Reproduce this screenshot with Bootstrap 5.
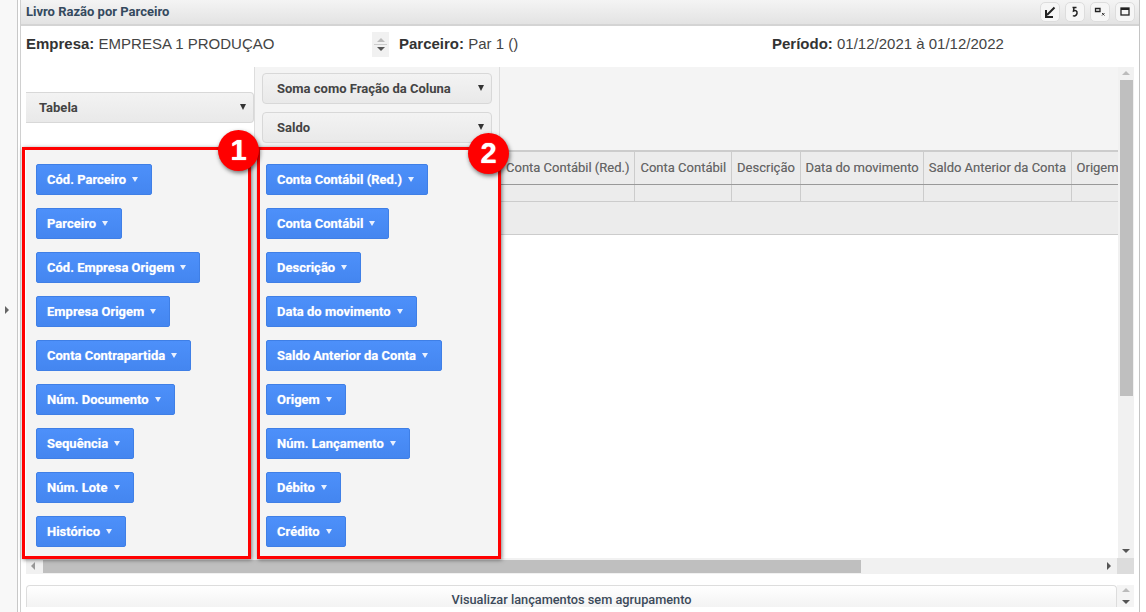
<!DOCTYPE html>
<html lang="pt-BR"><head><meta charset="utf-8"><title>Livro Razão por Parceiro</title>
<link href="https://cdn.jsdelivr.net/npm/bootstrap@5.3.0/dist/css/bootstrap.min.css" rel="stylesheet">
<style>
html,body{height:612px;overflow:hidden;background:#fff;font-family:"Liberation Sans",Arial,sans-serif}
.shell{height:612px;width:1146px;position:relative}
.rail{width:18px;background:#f8f8f8;border-right:1px solid #c8c8c8;margin-right:2px;padding-top:8px}
.rail-arrow{width:0;height:0;border-left:4px solid #666;border-top:4px solid transparent;border-bottom:4px solid transparent;margin-left:5px}
.panel{width:1120px;height:612px;border-left:1px solid #d0d0d0;border-right:1px solid #c4c4c4}
.phead{height:26px;background:linear-gradient(#f4f4f4,#e3e3e3);border-bottom:2px solid #d4d4d4;padding:0 4px 1px 5px;font:700 13px Roboto,sans-serif;color:#34495e}
.hgap{gap:5px}
.hbtn{width:20px;height:20px;background:#f6f6f6;border:1px solid #ddd;border-radius:5px}
.infor{height:41px;padding:0 0 5px 5px;font-size:15px;color:#444}
.infor b{color:#333}
.i1{width:346px}.i2{width:400px}
.spin{width:17px;height:25px;background:#f1f1f1;margin-right:10px}
.up{width:0;height:0;border-left:4px solid transparent;border-right:4px solid transparent;border-bottom:4px solid #bbb}
.dn{width:0;height:0;border-left:4px solid transparent;border-right:4px solid transparent;border-top:4px solid #555}
.spin hr{width:13px;margin:2px 0;opacity:1;border-color:#ccc}
.pivot{margin-left:5px;width:1108px}
.view{width:1092px;height:491px;overflow:hidden}
.c1{width:228px;flex:none}.c2{width:246px;flex:none}
.c1top{height:83px;padding-top:25px;background:#fff}
.c2top{height:83px;background:#f4f4f4;border-left:1px solid #ddd;border-right:1px solid #ddd;padding:6px 7px 0 7px}
.c3top{height:83px;background:#f4f4f4;flex:1}
.pick{height:31px;background:linear-gradient(#f3f3f3,#e9e9e9);border:1px solid #d8d8d8;font:700 13px Roboto,sans-serif;color:#444;padding:0 14px;border-radius:4px;position:relative}
.pick::after{content:"";position:absolute;right:7px;top:11px;border-left:3.5px solid transparent;border-right:3.5px solid transparent;border-top:6px solid #333}
.pick-a{width:228px;border-left:0;border-radius:0 4px 4px 0;padding-left:13px}
.chips{background:#f4f4f4;height:408px;padding:14px 0 0 10px;gap:13px}
.chips2{padding-left:12px}
.chip{height:31px;align-self:flex-start;background:linear-gradient(#4d90fa,#4486f0);border:1px solid #3f7fe6;border-radius:2px;color:#fff;font:700 13px Roboto,sans-serif;padding:0 13px 0 10px;text-shadow:0 0 1px rgba(255,255,255,.5)}
.chip::after{content:"";margin-left:6px;border-left:3.5px solid transparent;border-right:3.5px solid transparent;border-top:5px solid #e8f0ff}
.grid-wrap{flex:1;overflow:hidden;background:#fff}
.gt{border-collapse:collapse;font:400 13px Roboto,sans-serif;color:#666;white-space:nowrap;margin:0;text-shadow:0 0 .5px rgba(90,90,90,.5)}
.gt th{font-weight:400;background:#ececec;height:33px;padding:0 5px;border-left:1px solid #ccc;border-right:1px solid #ccc;border-top:2px solid #ccc;border-bottom:1px solid #999}
.gt th:first-child{padding-left:6px}
.gt th:nth-child(4),.gt th:nth-child(5){padding:0 4.5px}
.gt td{background:#ececec;height:17px;border:1px solid #ccc;padding:0}
.gt th:first-child,.gt td:first-child{border-left:0}
.grp{height:33px;background:#ececec;border-bottom:1px solid #ccc}
.vsb{width:16px;background:#f1f1f1;padding:0 0 5px}
.vth{width:13px;height:316px;background:#bfbfbf;margin:5px 0 0 0}
.hsb{height:16px;background:#f1f1f1;width:1108px}
.hth{width:818px;height:13px;background:#bfbfbf;margin:1px 0 0 0}
.lft{width:0;height:0;border-right:4px solid #999;border-top:4px solid transparent;border-bottom:4px solid transparent;margin:0 8px 0 5px}
.rgt{width:0;height:0;border-left:4px solid #555;border-top:4px solid transparent;border-bottom:4px solid transparent;margin-right:6px}
.corner{width:17px;height:16px;background:#dcdcdc}
.foot{margin:11px 0 0 5px;width:1108px;height:22px}
.fbtn{width:1091px;height:22px;background:linear-gradient(#fff,#f3f3f3);border:1px solid #ddd;border-bottom:0;border-radius:4px 4px 0 0;font:500 12.75px Roboto,sans-serif;color:#3c4a5a;padding-top:6px;overflow:hidden;white-space:nowrap}
.fspin{width:17px;background:#f4f4f4}
.redbox{position:absolute;border:3px solid #f00;box-shadow:1px 1px 4px rgba(0,0,0,.5);top:147px;height:412px;pointer-events:none}
.r1{left:22px;width:229px}.r2{left:257px;width:244px}
.num{position:absolute;width:41px;height:41px;border-radius:50%;background:#f00;color:#fff;font:700 29px/41px "Liberation Sans",sans-serif;text-align:center;box-shadow:1px 2px 4px rgba(0,0,0,.55);text-shadow:0 0 1px #fff}
.n1{left:218px;top:130px}.n2{left:468px;top:133px}
</style></head><body>
<div class="shell d-flex">
<aside class="rail d-flex align-items-center"><span class="rail-arrow"></span></aside>
<main class="panel">
<div class="phead d-flex align-items-center justify-content-between"><span>Livro Razão por Parceiro</span>
<div class="d-flex hgap">
<span class="hbtn d-flex align-items-center justify-content-center"><svg width="14" height="14" viewBox="0 0 14 14"><path d="M11.5 2.5 4 10M3 5v7h7" fill="none" stroke="#222" stroke-width="2"/></svg></span>
<span class="hbtn d-flex align-items-center justify-content-center"><svg width="10" height="12" viewBox="0 0 10 12"><path d="M2.5 1.5h4M4 1.5 3.500 5c2-1 4 0 3.500 2.500S4 10.500 3 9.500" fill="none" stroke="#222" stroke-width="1.500"/></svg></span>
<span class="hbtn d-flex align-items-center justify-content-center"><svg width="12" height="10" viewBox="0 0 12 10"><path d="M1.500 1.500h4.500v3h-4.500z" fill="none" stroke="#222" stroke-width="1.300"/><path d="M8 6l2.500 2.500M10.500 6 8 8.500" stroke="#333"/></svg></span>
<span class="hbtn d-flex align-items-center justify-content-center"><svg width="10" height="9" viewBox="0 0 10 9"><rect x="1" y="1" width="8" height="7" fill="none" stroke="#222" stroke-width="1.300"/><rect x="1" y="1" width="8" height="2" fill="#222"/></svg></span>
</div></div>
<div class="infor d-flex align-items-center">
<div class="i1"><b>Empresa:</b> EMPRESA 1 PRODUÇAO</div>
<div class="i2 d-flex align-items-center"><span class="spin d-flex flex-column align-items-center justify-content-center"><i class="up"></i><hr><i class="dn"></i></span><span><b>Parceiro:</b> Par 1 ()</span></div>
<div><b>Período:</b> 01/12/2021 à 01/12/2022</div>
</div>
<div class="pivot">
<div class="d-flex">
<div class="view d-flex">
<div class="c1">
<div class="c1top d-flex align-items-start"><div class="pick pick-a d-flex align-items-center">Tabela</div></div>
<div class="chips d-flex flex-column">
<span class="chip d-inline-flex align-items-center">Cód. Parceiro</span>
<span class="chip d-inline-flex align-items-center">Parceiro</span>
<span class="chip d-inline-flex align-items-center">Cód. Empresa Origem</span>
<span class="chip d-inline-flex align-items-center">Empresa Origem</span>
<span class="chip d-inline-flex align-items-center">Conta Contrapartida</span>
<span class="chip d-inline-flex align-items-center">Núm. Documento</span>
<span class="chip d-inline-flex align-items-center">Sequência</span>
<span class="chip d-inline-flex align-items-center">Núm. Lote</span>
<span class="chip d-inline-flex align-items-center">Histórico</span>
</div></div>
<div class="c2">
<div class="c2top d-flex flex-column gap-2"><div class="pick d-flex align-items-center">Soma como Fração da Coluna</div><div class="pick d-flex align-items-center">Saldo</div></div>
<div class="chips chips2 d-flex flex-column">
<span class="chip d-inline-flex align-items-center">Conta Contábil (Red.)</span>
<span class="chip d-inline-flex align-items-center">Conta Contábil</span>
<span class="chip d-inline-flex align-items-center">Descrição</span>
<span class="chip d-inline-flex align-items-center">Data do movimento</span>
<span class="chip d-inline-flex align-items-center">Saldo Anterior da Conta</span>
<span class="chip d-inline-flex align-items-center">Origem</span>
<span class="chip d-inline-flex align-items-center">Núm. Lançamento</span>
<span class="chip d-inline-flex align-items-center">Débito</span>
<span class="chip d-inline-flex align-items-center">Crédito</span>
</div></div>
<div class="grid-wrap">
<div class="c3top"></div>
<table class="gt"><tr><th>Conta Contábil (Red.)</th><th>Conta Contábil</th><th>Descrição</th><th>Data do movimento</th><th>Saldo Anterior da Conta</th><th>Origem</th></tr>
<tr><td></td><td></td><td></td><td></td><td></td><td></td></tr></table>
<div class="grp"></div>
</div>
</div>
<div class="vsb d-flex flex-column align-items-center justify-content-between"><div class="d-flex flex-column align-items-center"><i class="up mt-1"></i><div class="vth"></div></div><i class="dn"></i></div>
</div>
<div class="d-flex"><div class="hsb d-flex align-items-center"><i class="lft"></i><div class="hth"></div><i class="rgt ms-auto"></i></div><div class="corner"></div></div>
</div>
<div class="foot d-flex"><div class="fbtn text-center">Visualizar lançamentos sem agrupamento</div><div class="fspin d-flex flex-column align-items-center justify-content-center gap-2"><i class="up"></i><i class="dn"></i></div></div>
</main>
<div class="redbox r1"></div><div class="redbox r2"></div>
<div class="num n1">1</div><div class="num n2">2</div>
</div>
</body></html>
